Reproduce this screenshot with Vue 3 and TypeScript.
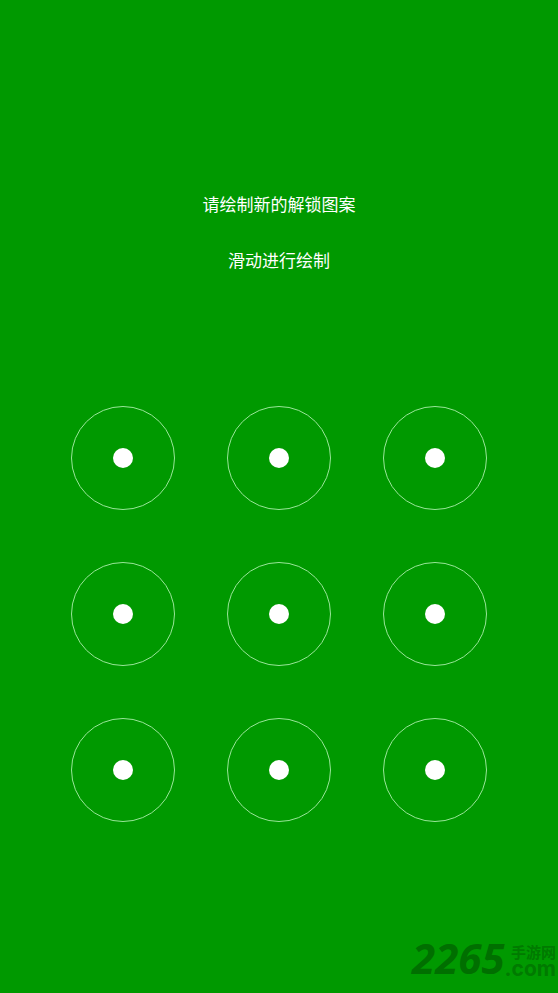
<script setup lang="ts">
import { ref } from 'vue'

const nodes = Array.from({ length: 9 }, (_, i) => i + 1)
const pattern = ref<number[]>([])

function addNode(node: number): void {
  if (!pattern.value.includes(node)) pattern.value.push(node)
}

function dragOver(node: number, event: PointerEvent): void {
  if (event.buttons === 1) addNode(node)
}
</script>

<template>
  <main class="screen">
    <header class="prompt">
      <h1 class="line">请绘制新的解锁图案</h1>
      <p class="line">滑动进行绘制</p>
    </header>

    <section class="pad" aria-label="解锁图案">
      <button
        v-for="node in nodes"
        :key="node"
        type="button"
        class="node"
        :aria-label="`${node}`"
        :aria-pressed="pattern.includes(node)"
        @click="addNode(node)"
        @pointerenter="dragOver(node, $event)"
      >
        <span class="dot"></span>
      </button>
    </section>

    <footer class="brand">
      <span class="number">2265</span>
      <span class="site">
        <span class="name">手游网</span>
        <span class="domain">.com</span>
      </span>
    </footer>
  </main>
</template>

<style>
body {
  margin: 0;
  background: #009900;
}
</style>

<style scoped>
.screen {
  box-sizing: border-box;
  min-height: 100vh;
  display: flex;
  flex-direction: column;
  align-items: center;
  padding-top: 192px;
  background: #009900;
  color: #fff;
  font-family: "Noto Sans CJK SC", sans-serif;
}

.prompt {
  display: flex;
  flex-direction: column;
  align-items: center;
  gap: 32px;
  margin-bottom: 134px;
}

.line {
  margin: 0;
  font-size: 17px;
  line-height: 24px;
  font-weight: 400;
}

.pad {
  display: grid;
  grid-template-columns: repeat(3, 104px);
  gap: 52px;
  touch-action: none;
}

.node {
  box-sizing: border-box;
  width: 104px;
  height: 104px;
  display: grid;
  place-items: center;
  padding: 0;
  border: 1px solid #99e699;
  border-radius: 50%;
  background: none;
  cursor: pointer;
}

.dot {
  width: 20px;
  height: 20px;
  border-radius: 50%;
  background: #fff;
}

.brand {
  align-self: flex-end;
  display: flex;
  align-items: flex-end;
  margin-top: auto;
  padding: 0 2px 15px 0;
  color: #006f00;
}

.number {
  font-family: "Open Sans", sans-serif;
  font-size: 42px;
  line-height: 40px;
  font-weight: 700;
  font-style: italic;
}

.site {
  display: flex;
  flex-direction: column;
  align-items: flex-end;
  color: #007a00;
}

.name {
  font-size: 15px;
  line-height: 16px;
  font-weight: 700;
}

.domain {
  font-family: Inter, sans-serif;
  font-size: 21px;
  line-height: 18px;
  font-weight: 700;
}
</style>
